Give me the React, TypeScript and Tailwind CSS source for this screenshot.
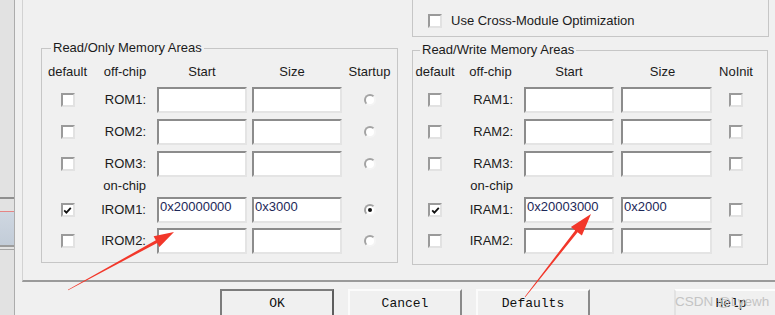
import React from 'react';

type Layout = 'ro' | 'rw';

interface MemRow {
  label: string;
  start: string;
  size: string;
  def: boolean;
  last: boolean;
  mt: string;
}

const romRows: MemRow[] = [
  { label: 'ROM1:', start: '', size: '', def: false, last: false, mt: 'mt-[7px]' },
  { label: 'ROM2:', start: '', size: '', def: false, last: false, mt: 'mt-[6px]' },
  { label: 'ROM3:', start: '', size: '', def: false, last: false, mt: 'mt-[6px]' },
  { label: 'IROM1:', start: '0x20000000', size: '0x3000', def: true, last: true, mt: 'mt-[3px]' },
  { label: 'IROM2:', start: '', size: '', def: false, last: false, mt: 'mt-[5px]' },
];

const ramRows: MemRow[] = [
  { label: 'RAM1:', start: '', size: '', def: false, last: false, mt: 'mt-[7px]' },
  { label: 'RAM2:', start: '', size: '', def: false, last: false, mt: 'mt-[6px]' },
  { label: 'RAM3:', start: '', size: '', def: false, last: false, mt: 'mt-[6px]' },
  { label: 'IRAM1:', start: '0x20003000', size: '0x2000', def: true, last: false, mt: 'mt-[3px]' },
  { label: 'IRAM2:', start: '', size: '', def: false, last: false, mt: 'mt-[5px]' },
];

function Check({ checked }: { checked?: boolean }) {
  return (
    <div className="w-[14px] h-[14px] bg-white border-2 border-t-[#9a9a9a] border-l-[#9a9a9a] border-r-[#e2e2e2] border-b-[#e2e2e2] flex items-center justify-center">
      {checked && (
        <svg width="9" height="9" viewBox="0 0 9 9">
          <path d="M1.2 4.3 L3.4 6.6 L7.8 1.8" fill="none" stroke="#111" strokeWidth="1.8" />
        </svg>
      )}
    </div>
  );
}

function Radio({ checked }: { checked?: boolean }) {
  return (
    <div className="w-[12px] h-[12px] rounded-full bg-white border-2 border-t-[#a3a3a3] border-l-[#a3a3a3] border-r-[#f4f4f4] border-b-[#f4f4f4] flex items-center justify-center">
      {checked && <div className="w-[4px] h-[4px] rounded-full bg-[#111]" />}
    </div>
  );
}

function Field({ value, wide }: { value: string; wide?: boolean }) {
  return (
    <div
      className={`${wide ? 'w-[91px]' : 'w-[90px]'} h-[26px] bg-white border-2 border-t-[#8c8c8c] border-l-[#8c8c8c] border-r-[#e4e4e4] border-b-[#e4e4e4] pl-[1px] leading-[16px] text-[13px] text-[#1c2858]`}
    >
      {value}
    </div>
  );
}

function MemoryGroup({ title, layout, rows }: { title: string; layout: Layout; rows: MemRow[] }) {
  const ro = layout === 'ro';
  const c1 = ro ? 'w-[51px]' : 'w-[44px]';
  const c2 = ro ? 'w-[64px]' : 'w-[67px]';
  const gap = ro ? 'ml-[5px]' : 'ml-[7px]';
  const c5 = ro ? 'w-[55px]' : 'w-[48px]';

  return (
    <fieldset
      className={`${ro ? 'ml-[18px] mt-[3px] w-[357px]' : 'ml-[14px] mt-[5px] w-[356px]'} h-[223px] border border-[#c6c6c6] shrink-0`}
    >
      <legend className={`${ro ? 'ml-[9px]' : 'ml-[7px]'} px-[2px] leading-[16px]`}>{title}</legend>

      <div className={`flex leading-[16px] ${ro ? 'mt-[8px]' : 'mt-[6px]'}`}>
        <div className={`${c1} text-center`}>default</div>
        <div className={`${c2} text-center`}>off-chip</div>
        <div className="w-[90px] text-center">Start</div>
        <div className={`${ro ? 'w-[90px] pr-[10px]' : 'w-[91px] pr-[8px]'} ${gap} text-center`}>Size</div>
        <div className={`${c5} text-center`}>{ro ? 'Startup' : 'NoInit'}</div>
      </div>

      {rows.map((r, i) => (
        <React.Fragment key={r.label}>
          {i === 3 && (
            <div className="flex leading-[16px] mt-[1px]">
              <div className={c1} />
              <div className={`${c2} text-right pr-[11px]`}>on-chip</div>
            </div>
          )}
          <div className={`flex items-center h-[26px] ${r.mt}`}>
            <div className={`${c1} flex justify-center`}>
              <Check checked={r.def} />
            </div>
            <div className={`${c2} text-right pr-[11px]`}>{r.label}</div>
            <Field value={r.start} />
            <div className={gap}>
              <Field value={r.size} wide={!ro} />
            </div>
            <div className={`${c5} flex justify-center`}>
              {ro ? <Radio checked={r.last} /> : <Check />}
            </div>
          </div>
        </React.Fragment>
      ))}
    </fieldset>
  );
}

function DlgButton({ label, variant }: { label: string; variant: 'default' | 'normal' | 'faded' }) {
  const look =
    variant === 'default'
      ? 'border-2 border-[#7c7c7c] border-r-[#5e5e5e]'
      : variant === 'normal'
        ? 'border-2 border-t-[#fbfbfb] border-l-[#fbfbfb] border-r-[#8a8a8a] border-b-[#8a8a8a]'
        : 'border-2 border-t-[#fdfdfd] border-l-[#e2e2e2] border-r-[#dadada] border-b-[#dadada]';
  return (
    <div
      className={`w-[114px] h-[30px] shrink-0 bg-[#f0f0f0] ${look} flex justify-center pt-[4px] font-['Liberation_Mono',monospace] text-[13px] leading-[18px] text-[#111]`}
    >
      {label}
    </div>
  );
}

export default function App() {
  return (
    <div className="relative w-[775px] h-[315px] overflow-hidden flex bg-[#f0f0f0] font-['Liberation_Sans',Arial,sans-serif] text-[13px] text-[#1b1b1b]">
      {/* window behind the dialog */}
      <div className="w-[15px] shrink-0 flex flex-col bg-[#e2e2e2] border-r border-[#acacac]">
        <div className="h-[197px]" />
        <div className="h-[2px] bg-[#8f8f8f]" />
        <div className="h-[12px]" />
        <div className="h-[1px] bg-[#e58585]" />
        <div className="h-[33px] bg-gradient-to-b from-[#cfd7e1] to-[#c2ccd8]" />
        <div className="h-[2px] bg-[#9c9c9c]" />
        <div className="h-[2px]" />
        <div className="h-[1px] bg-[#a5a5a5]" />
        <div className="flex-1" />
      </div>

      <div className="flex-1 flex flex-col">
        {/* tab sheet */}
        <div className="ml-[7px] h-[282px] shrink-0 border-l border-[#d2d2d2] border-b-2 border-b-[#9a9a9a] flex flex-col">
          <div className="ml-[389px] w-[357px] h-[37px] shrink-0 border-l border-r border-b border-[#c6c6c6] flex items-center gap-[9px] pl-[15px] pt-[5px]">
            <Check />
            <span className="leading-[16px]">Use Cross-Module Optimization</span>
          </div>

          <div className="flex items-start">
            <MemoryGroup title="Read/Only Memory Areas" layout="ro" rows={romRows} />
            <MemoryGroup title="Read/Write Memory Areas" layout="rw" rows={ramRows} />
          </div>
        </div>

        {/* buttons */}
        <div className="flex mt-[7px] ml-[205px] gap-[14px]">
          <DlgButton label="OK" variant="default" />
          <DlgButton label="Cancel" variant="normal" />
          <DlgButton label="Defaults" variant="normal" />
          <div className="ml-[70px]">
            <DlgButton label="Help" variant="faded" />
          </div>
        </div>
      </div>

      {/* watermark */}
      <div className="absolute left-[675px] top-[294px] whitespace-nowrap text-[13.5px] leading-[16px] text-[#c4c4c4] pointer-events-none">
        CSDN @Lyewh
      </div>

      {/* annotation arrows */}
      <svg className="absolute inset-0 pointer-events-none" width="775" height="315" viewBox="0 0 775 315">
        <polygon
          points="67.9,289.7 155.8,240.3 153.6,236.3 174,232 159.4,246.9 157.2,242.9 68.1,290.3"
          fill="#f2372a"
        />
        <polygon
          points="524.8,296.8 575.2,230.4 570.9,227 591,214 581.9,235.6 577.6,232.2 525.2,297.2"
          fill="#f2372a"
        />
      </svg>
    </div>
  );
}
